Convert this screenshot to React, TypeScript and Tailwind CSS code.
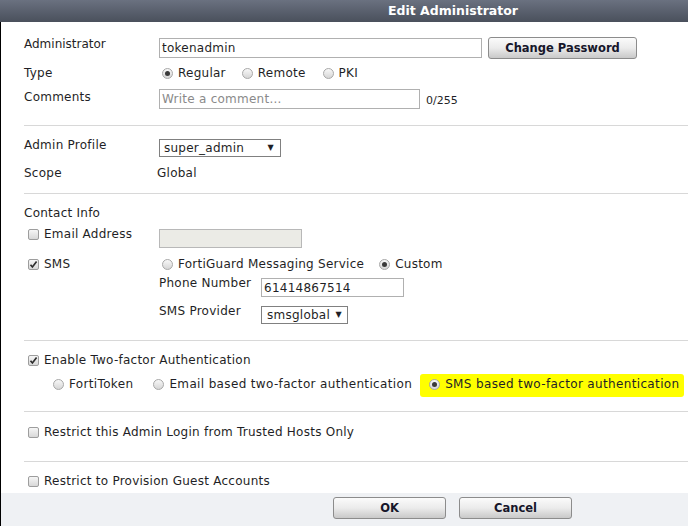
import React from 'react';

const Radio: React.FC<{ checked?: boolean }> = ({ checked }) => (
  <span className="flex items-center justify-center w-[11px] h-[11px] rounded-full border border-[#a8a8a8] bg-linear-to-b from-[#f8f8f8] to-[#d6d6d6] shrink-0">
    {checked && <span className="w-[5px] h-[5px] rounded-full bg-[#3a3a3a]" />}
  </span>
);

const Checkbox: React.FC<{ checked?: boolean }> = ({ checked }) => (
  <span className="flex items-center justify-center w-[11px] h-[11px] rounded-[2px] border border-[#9d9d9d] bg-linear-to-b from-[#f6f6f6] to-[#d8d8d8] shrink-0">
    {checked && (
      <svg width="9" height="9" viewBox="0 0 9 9">
        <path d="M1.5 4.8 L3.4 7 L7.6 1.6" fill="none" stroke="#2d2d2d" strokeWidth="1.7" />
      </svg>
    )}
  </span>
);

const Option: React.FC<{ checked?: boolean; label: string; className?: string }> = ({ checked, label, className = '' }) => (
  <span className={`flex items-center gap-[5px] ${className}`}>
    <Radio checked={checked} />
    <span>{label}</span>
  </span>
);

const CheckLabel: React.FC<{ checked?: boolean; label: string }> = ({ checked, label }) => (
  <span className="flex items-center gap-[5px] ml-[4px]">
    <Checkbox checked={checked} />
    <span>{label}</span>
  </span>
);

const Button: React.FC<{ label: string; className?: string }> = ({ label, className = '' }) => (
  <button className={`flex items-center justify-center rounded-[3px] border border-[#8c8c8c] bg-linear-to-b from-[#fbfbfb] via-[#ebebeb] to-[#c9c9c9] font-bold text-[11.5px] tracking-normal text-[#16162a] ${className}`}>
    {label}
  </button>
);

const Separator: React.FC<{ className?: string }> = ({ className = '' }) => (
  <div className={`h-px bg-[#d8d8d8] ${className}`} />
);

const App: React.FC = () => {
  return (
    <div className="w-[688px] h-[526px] overflow-hidden bg-white font-['DejaVu_Sans',sans-serif] text-[12px] leading-[14px] tracking-[0.25px] text-[#1f1f26]">
      {/* Title bar */}
      <div className="h-[22px] flex items-center pl-[388px] bg-linear-to-b from-[#6a7180] to-[#4a505c] text-white font-bold text-[12.5px] tracking-normal">
        Edit Administrator
      </div>

      <div className="border-l border-black h-[504px] flex flex-col">
        <div className="pl-[23px]">
          {/* Administrator */}
          <div className="flex h-[22px] mt-[15px]">
            <div className="w-[135px] tracking-normal">Administrator</div>
            <div className="mt-px h-[20px] w-[323px] border border-[#b0b0b0] px-[2px] flex items-center">tokenadmin</div>
            <Button label="Change Password" className="ml-[6px] w-[149px] h-[22px]" />
          </div>

          {/* Type */}
          <div className="flex h-[14px] mt-[7px]">
            <div className="w-[135px]">Type</div>
            <div className="flex ml-[3px]">
              <Option checked label="Regular" />
              <Option label="Remote" className="ml-[16px]" />
              <Option label="PKI" className="ml-[17px]" />
            </div>
          </div>

          {/* Comments */}
          <div className="flex h-[20px] mt-[9px]">
            <div className="w-[135px] mt-px">Comments</div>
            <div className="h-[20px] w-[261px] border border-[#b0b0b0] px-[2px] flex items-center text-[#8a8a8a]">Write a comment...</div>
            <div className="ml-[6px] mt-[5px] text-[11px] tracking-normal">0/255</div>
          </div>
        </div>

        <Separator className="mt-[16px] ml-[23px]" />

        <div className="pl-[23px]">
          {/* Admin Profile */}
          <div className="flex h-[19px] mt-[12px]">
            <div className="w-[135px]">Admin Profile</div>
            <div className="mt-px h-[18px] w-[122px] border border-[#808080] flex items-center justify-between pl-[4px] pr-[6px]">
              <span>super_admin</span>
              <span className="text-[8px]">▼</span>
            </div>
          </div>

          {/* Scope */}
          <div className="flex h-[14px] mt-[9px]">
            <div className="w-[133px]">Scope</div>
            <div>Global</div>
          </div>
        </div>

        <Separator className="mt-[13px] ml-[23px]" />

        <div className="pl-[23px]">
          <div className="h-[14px] mt-[12px]">Contact Info</div>

          {/* Email */}
          <div className="flex h-[21px] mt-[7px]">
            <div className="w-[135px] h-[14px] flex">
              <CheckLabel label="Email Address" />
            </div>
            <div className="mt-[2px] h-[19px] w-[143px] border border-[#b8b8b8] bg-[#ebebe6]" />
          </div>

          {/* SMS */}
          <div className="flex h-[14px] mt-[9px]">
            <div className="w-[135px] flex">
              <CheckLabel checked label="SMS" />
            </div>
            <div className="flex ml-[3px]">
              <Option label="FortiGuard Messaging Service" />
              <Option checked label="Custom" className="ml-[15px]" />
            </div>
          </div>

          {/* Phone */}
          <div className="flex h-[21px] mt-[5px] pl-[135px]">
            <div className="w-[102px]">Phone Number</div>
            <div className="mt-[2px] h-[19px] w-[143px] border border-[#b0b0b0] px-[2px] flex items-center">61414867514</div>
          </div>

          {/* SMS provider */}
          <div className="flex h-[20px] mt-[7px] pl-[135px]">
            <div className="w-[102px]">SMS Provider</div>
            <div className="mt-[2px] h-[18px] w-[87px] border border-[#808080] flex items-center justify-between pl-[5px] pr-[5px]">
              <span>smsglobal</span>
              <span className="text-[8px]">▼</span>
            </div>
          </div>
        </div>

        <Separator className="mt-[16px] ml-[23px]" />

        <div className="pl-[23px]">
          <div className="flex h-[14px] mt-[12px]">
            <CheckLabel checked label="Enable Two-factor Authentication" />
          </div>
          <div className="flex h-[14px] mt-[10px] ml-[29px] tracking-[0.35px]">
            <Option label="FortiToken" />
            <Option label="Email based two-factor authentication" className="ml-[20px]" />
            <span className="relative ml-[17px]">
              <span className="absolute -left-[9px] -right-[5px] -top-[3px] -bottom-[6px] bg-[#ffff00] rounded-[3px]" />
              <Option checked label="SMS based two-factor authentication" className="relative" />
            </span>
          </div>
        </div>

        <Separator className="mt-[20px] ml-[23px]" />

        <div className="pl-[23px] flex h-[14px] mt-[13px]">
          <CheckLabel label="Restrict this Admin Login from Trusted Hosts Only" />
        </div>

        <Separator className="mt-[22px] ml-[23px]" />

        <div className="pl-[23px] flex h-[14px] mt-[12px]">
          <CheckLabel label="Restrict to Provision Guest Accounts" />
        </div>

        {/* Footer */}
        <div className="mt-[5px] flex-1 bg-[#eff1f4] flex gap-[13px] pl-[332px] pt-[4px]">
          <Button label="OK" className="w-[113px] h-[22px]" />
          <Button label="Cancel" className="w-[113px] h-[22px]" />
        </div>
      </div>
    </div>
  );
};

export default App;
